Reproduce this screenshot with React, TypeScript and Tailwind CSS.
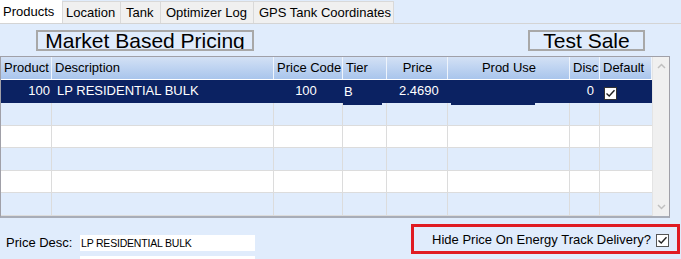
import React from "react";

const cols = [51, 222, 69, 44, 61, 122, 30, 52];
const headers = ["Product", "Description", "Price Code", "Tier", "Price", "Prod Use", "Disc", "Default"];
const headerAlign = ["text-left", "text-left", "text-left", "text-left", "text-center", "text-center", "text-left", "text-left"];

function Check({ className = "" }: { className?: string }) {
  return (
    <div className={"w-[13px] h-[13px] bg-white border border-[#333] flex items-center justify-center " + className}>
      <svg width="11" height="11" viewBox="0 0 11 11">
        <path d="M1.5 5.5 L4.2 8 L9.5 2.2" fill="none" stroke="#222" strokeWidth="1.4" />
      </svg>
    </div>
  );
}

export default function App() {
  const tmpl = "51px 222px 69px 44px 61px 122px 30px 52px";
  return (
    <div className="w-[681px] h-[259px] overflow-hidden bg-[#e0ecfc] font-['Liberation_Sans',Arial,sans-serif] text-[13px] text-black flex flex-col">
      {/* tab strip */}
      <div className="h-[24px] flex items-end border-b border-[#d4d4d4] shrink-0">
        <div className="h-[24px] w-[62px] bg-white flex items-center pl-[3px] pt-[1px]">Products</div>
        <div className="h-[22px] w-[58px] bg-[#f0f0f0] border-l border-t border-[#d9d9d9] flex items-center pl-[3px]">Location</div>
        <div className="h-[22px] w-[40px] bg-[#f0f0f0] border-l border-t border-[#d9d9d9] flex items-center pl-[5px]">Tank</div>
        <div className="h-[22px] w-[93px] bg-[#f0f0f0] border-l border-t border-[#d9d9d9] flex items-center pl-[5px]">Optimizer Log</div>
        <div className="h-[22px] w-[141px] bg-[#f0f0f0] border-l border-t border-r border-[#d9d9d9] flex items-center pl-[5px]">GPS Tank Coordinates</div>
      </div>

      {/* title row */}
      <div className="flex mt-[6px] h-[21px] shrink-0">
        <div className="ml-[36px] w-[218px] h-[21px] border-2 border-[#a8a8a8] text-[21px] leading-[18px] flex justify-center overflow-hidden">
          <span className="mt-[0px]">Market Based Pricing</span>
        </div>
        <div className="ml-auto mr-[36px] w-[117px] h-[21px] border-2 border-[#a8a8a8] text-[21px] leading-[18px] flex justify-center overflow-hidden">
          <span>Test Sale</span>
        </div>
      </div>

      {/* grid */}
      <div className="mt-[5px] w-[670px] h-[162px] border border-[#a0a0a8] border-b-2 border-b-[#a8adb8] flex shrink-0 bg-[#f0f0f0]">
        <div className="w-[651px] flex flex-col">
          {/* header */}
          <div className="grid h-[23px] bg-gradient-to-b from-[#d3e1f5] to-[#a9c5ec] border-b border-white" style={{ gridTemplateColumns: tmpl }}>
            {headers.map((h, i) => (
              <div key={h} className={"border-r border-[#eef4fc] pl-[3px] pr-[2px] leading-[22px] whitespace-nowrap overflow-hidden " + headerAlign[i]}>
                {h}
              </div>
            ))}
          </div>
          {/* selected row */}
          <div className="grid h-[23px] bg-[#0b2262] text-white relative" style={{ gridTemplateColumns: tmpl }}>
            <div className="text-right pr-[2px] leading-[22px]">100</div>
            <div className="pl-[5px] leading-[22px]">LP RESIDENTIAL BULK</div>
            <div className="text-center leading-[22px] pr-[5px]">100</div>
            <div className="pl-[1px] leading-[24px] relative">
              B
              <div className="absolute left-0 right-[5px] bottom-[-1px] h-[2px] bg-[#0b2262]" />
            </div>
            <div className="pl-[12px] leading-[22px]">2.4690</div>
            <div className="relative">
              <div className="absolute left-[3px] right-[35px] bottom-[-1px] h-[2px] bg-[#0b2262]" />
            </div>
            <div className="text-right pr-[6px] leading-[22px]">0</div>
            <div className="flex items-center pl-[4px] pt-[2px]">
              <Check />
            </div>
          </div>
          {[0, 1, 2, 3, 4].map((r) => (
            <div
              key={r}
              className={"grid h-[23px] border-b border-[#dcdcdc] " + (r % 2 === 0 ? "bg-[#e0ecfc]" : "bg-white")}
              style={{ gridTemplateColumns: tmpl }}
            >
              {cols.map((_, i) => (
                <div key={i} className={i < cols.length - 1 ? "border-r border-[#dcdcdc]" : ""} />
              ))}
            </div>
          ))}
        </div>
        {/* scrollbar */}
        <div className="w-[17px] bg-[#f0f0f0] border-l border-[#e4e4e4] flex flex-col items-center justify-between py-[6px]">
          <svg width="9" height="6" viewBox="0 0 9 6">
            <path d="M1 5 L4.5 1.5 L8 5" fill="none" stroke="#c0c0c0" strokeWidth="1.5" />
          </svg>
          <svg width="9" height="6" viewBox="0 0 9 6">
            <path d="M1 1 L4.5 4.5 L8 1" fill="none" stroke="#c0c0c0" strokeWidth="1.5" />
          </svg>
        </div>
      </div>

      {/* bottom */}
      <div className="flex flex-1">
        <div className="flex pl-[6px] pt-[17px]">
          <div className="w-[74px] leading-[16px]">Price Desc:</div>
          <div className="flex flex-col gap-[5px]">
            <div className="w-[175px] h-[16px] bg-white text-[10.5px] leading-[16px] pl-[1px] tracking-[-0.2px]">LP RESIDENTIAL BULK</div>
            <div className="w-[175px] h-[16px] bg-white" />
          </div>
        </div>
        <div className="ml-auto mt-[6px] mr-[1px] w-[269px] h-[30px] border-[3px] border-[#e01b22] flex items-center justify-end pr-[8px] pt-[2px]">
          <span className="leading-[16px] mr-[5px]">Hide Price On Energy Track Delivery?</span>
          <Check className="border-[#555]" />
        </div>
      </div>
    </div>
  );
}
